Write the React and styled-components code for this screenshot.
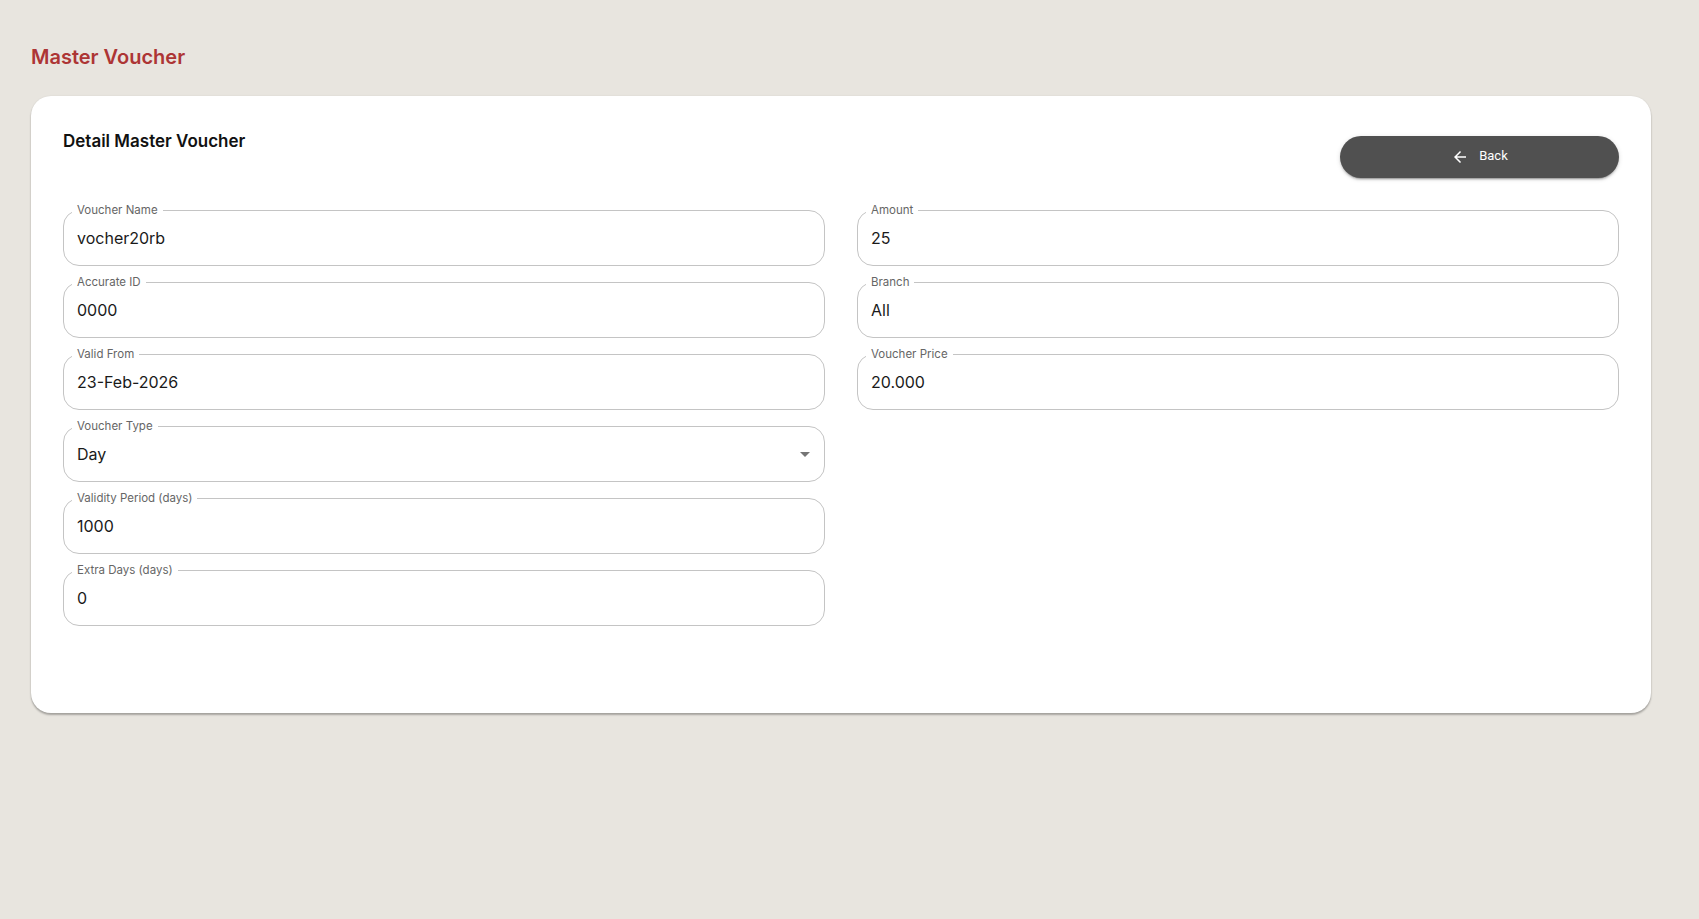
import React from "react";
import styled, { createGlobalStyle } from "styled-components";

const GlobalStyle = createGlobalStyle`
  html, body {
    margin: 0;
    padding: 0;
    background: #e8e5df;
    font-family: Inter, "Noto Sans", sans-serif;
    -webkit-font-smoothing: antialiased;
  }
  * { box-sizing: border-box; }
`;

const Page = styled.div`
  min-height: 919px;
  padding: 42px 48px 40px 31px;
`;

const PageTitle = styled.h1`
  margin: 0 0 24px;
  font-size: 20px;
  line-height: 30px;
  font-weight: 600;
  color: #ad3535;
`;

const Card = styled.section`
  background: #ffffff;
  border-radius: 20px;
  padding: 32px 32px 87px;
  box-shadow: 0 2px 2px rgba(0, 0, 0, 0.28), 0 0 2px rgba(0, 0, 0, 0.08);
`;

const Header = styled.div`
  display: flex;
  justify-content: space-between;
  align-items: flex-start;
  margin-bottom: 32px;
`;

const CardTitle = styled.h2`
  margin: 1px 0 0;
  font-size: 17px;
  line-height: 24px;
  font-weight: 600;
  color: #111;
`;

const BackButton = styled.button`
  margin-top: 8px;
  width: 279px;
  height: 42px;
  border: none;
  border-radius: 21px;
  background: #505050;
  color: #fff;
  display: flex;
  align-items: center;
  justify-content: center;
  gap: 10px;
  padding: 0 0 3px;
  font-family: Roboto, "Liberation Sans", sans-serif;
  font-size: 13px;
  font-weight: 400;
  cursor: pointer;
  box-shadow: 0 3px 1px -2px rgba(0,0,0,0.2), 0 2px 2px 0 rgba(0,0,0,0.14), 0 1px 5px 0 rgba(0,0,0,0.12);
  svg { display: block; margin-top: 3px; }
`;

const Grid = styled.div`
  display: grid;
  grid-template-columns: 1fr 1fr;
  column-gap: 32px;
  align-items: start;
`;

const Column = styled.div`
  display: flex;
  flex-direction: column;
  gap: 16px;
`;

const FieldBox = styled.div`
  position: relative;
  height: 56px;
  border: 1px solid #c4c4c4;
  border-radius: 16px;
  display: flex;
  align-items: center;
  padding: 0 13px;
`;

const FieldLabel = styled.span`
  position: absolute;
  top: -9px;
  left: 8px;
  padding: 0 5px;
  background: #fff;
  font-size: 11.5px;
  line-height: 16px;
  color: #666;
  white-space: nowrap;
`;

const FieldValue = styled.span`
  flex: 1;
  font-size: 16px;
  line-height: 23px;
  color: #1a1a1a;
`;

const DropIcon = styled.svg`
  position: absolute;
  right: 7px;
  top: 50%;
  margin-top: -12px;
  fill: #757575;
`;

const Field = ({ label, value, select }) => (
  <FieldBox>
    <FieldLabel>{label}</FieldLabel>
    <FieldValue>{value}</FieldValue>
    {select && (
      <DropIcon width="24" height="24" viewBox="0 0 24 24">
        <path d="M7 10l5 5 5-5z" />
      </DropIcon>
    )}
  </FieldBox>
);

const left = [
  { label: "Voucher Name", value: "vocher20rb" },
  { label: "Accurate ID", value: "0000" },
  { label: "Valid From", value: "23-Feb-2026" },
  { label: "Voucher Type", value: "Day", select: true },
  { label: "Validity Period (days)", value: "1000" },
  { label: "Extra Days (days)", value: "0" },
];

const right = [
  { label: "Amount", value: "25" },
  { label: "Branch", value: "All" },
  { label: "Voucher Price", value: "20.000" },
];

export default function App() {
  return (
    <>
      <GlobalStyle />
      <Page>
        <PageTitle>Master Voucher</PageTitle>
        <Card>
          <Header>
            <CardTitle>Detail Master Voucher</CardTitle>
            <BackButton>
              <svg width="18" height="18" viewBox="0 0 24 24" fill="#fff">
                <path d="M20 11H7.83l5.59-5.59L12 4l-8 8 8 8 1.41-1.41L7.83 13H20z" />
              </svg>
              Back
            </BackButton>
          </Header>
          <Grid>
            <Column>
              {left.map((f) => (
                <Field key={f.label} {...f} />
              ))}
            </Column>
            <Column>
              {right.map((f) => (
                <Field key={f.label} {...f} />
              ))}
            </Column>
          </Grid>
        </Card>
      </Page>
    </>
  );
}
